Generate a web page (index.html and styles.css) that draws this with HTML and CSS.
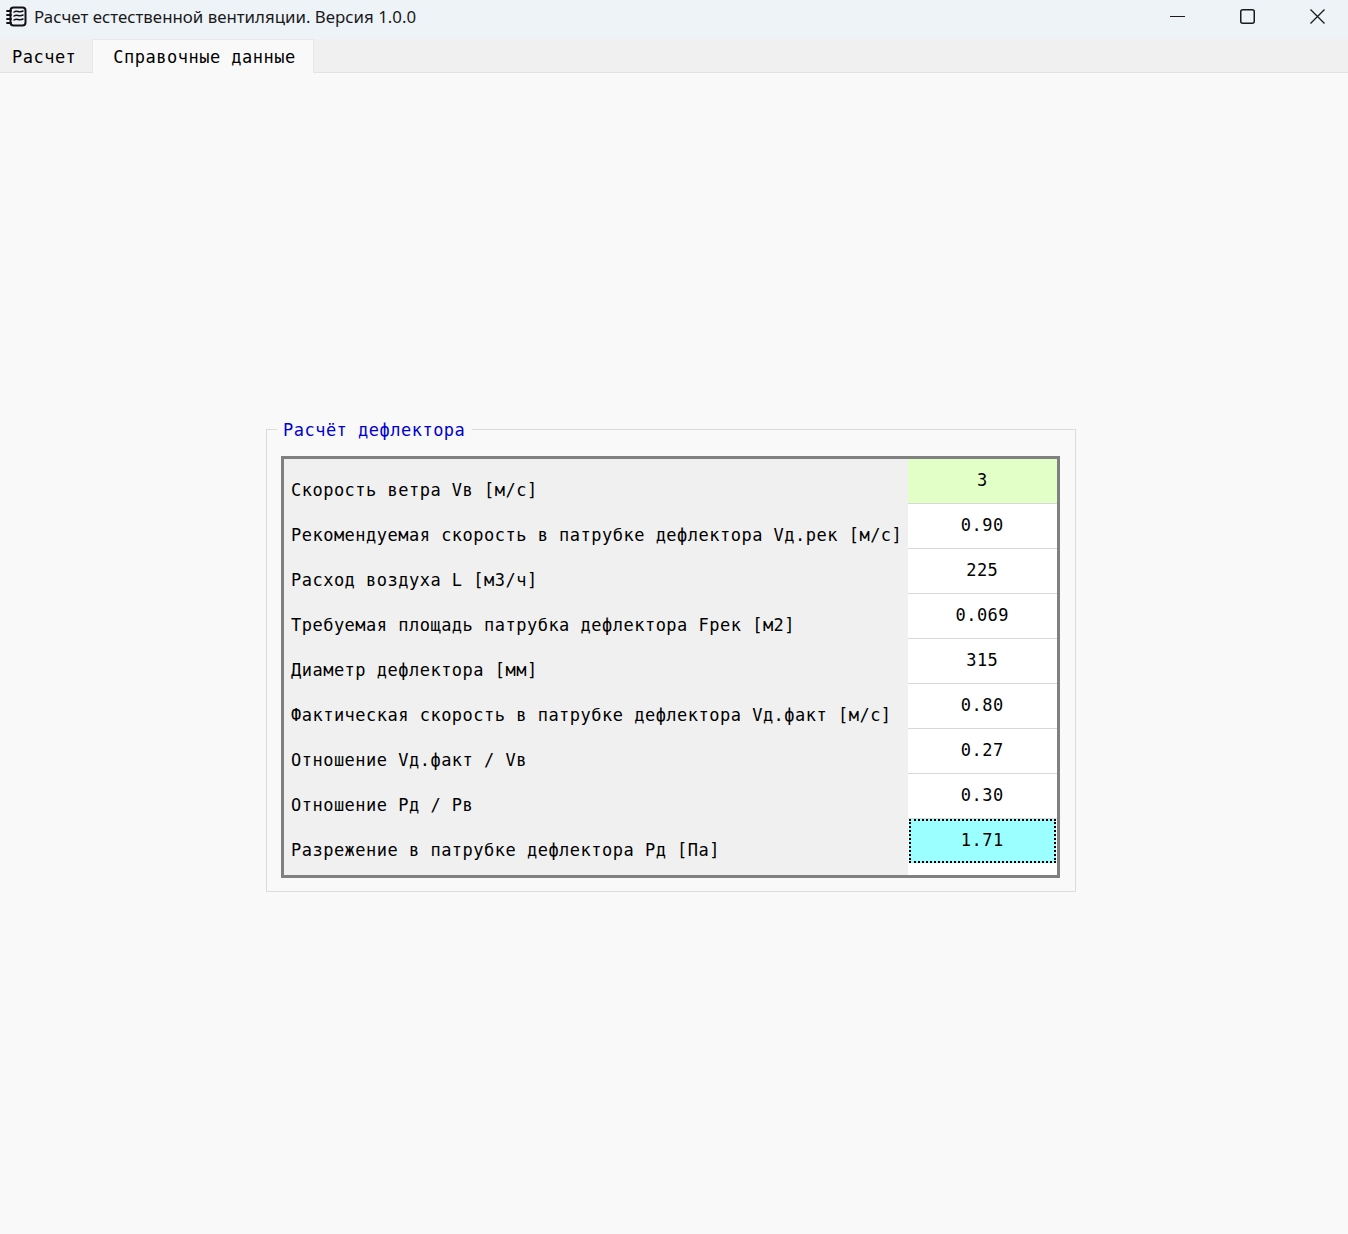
FILE: index.html
```html
<!DOCTYPE html>
<html lang="ru">
<head>
<meta charset="utf-8">
<title>Расчет естественной вентиляции</title>
<link rel="stylesheet" href="styles.css">
</head>
<body>

<div class="titlebar">
  <svg class="app-icon" width="22" height="22" viewBox="0 0 22 22" fill="none" stroke="#111" stroke-linecap="round" stroke-linejoin="round">
    <rect x="4.500" y="1.500" width="15" height="18" rx="3" stroke-width="2"/>
    <path d="M1 5h4M1 9h4M1 13h4M1 17h4" stroke-width="1.800"/>
    <path d="M8 6c3-2 5 1 9-1M8 10c3-2 5 1 9-1M8 14c3-2 5 1 9-1" stroke-width="1.500"/>
  </svg>
  <span class="title-text">Расчет естественной вентиляции. Версия 1.0.0</span>
  <div class="win-buttons">
    <svg width="15" height="15" viewBox="0 0 15 15" stroke="#1a1a1a" fill="none" stroke-width="1"><path d="M0 7.500h15"/></svg>
    <svg width="15" height="15" viewBox="0 0 15 15" stroke="#1a1a1a" fill="none" stroke-width="1.500"><rect x=".75" y=".75" width="13.500" height="13.500" rx="2"/></svg>
    <svg width="15" height="15" viewBox="0 0 15 15" stroke="#1a1a1a" fill="none" stroke-width="1.300"><path d="M.5.5l14 14M14.500.5l-14 14"/></svg>
  </div>
</div>

<div class="tabs">
  <div class="tab">Расчет</div>
  <div class="tab tab-active">Справочные данные</div>
</div>

<div class="content">
  <fieldset class="group">
    <legend>Расчёт дефлектора</legend>
    <table class="grid">
      <tr class="first"><th>Скорость ветра Vв [м/с]</th><td class="input">3</td></tr>
      <tr><th>Рекомендуемая скорость в патрубке дефлектора Vд.рек [м/с]</th><td>0.90</td></tr>
      <tr><th>Расход воздуха L [м3/ч]</th><td>225</td></tr>
      <tr><th>Требуемая площадь патрубка дефлектора Fрек [м2]</th><td>0.069</td></tr>
      <tr><th>Диаметр дефлектора [мм]</th><td>315</td></tr>
      <tr><th>Фактическая скорость в патрубке дефлектора Vд.факт [м/с]</th><td>0.80</td></tr>
      <tr><th>Отношение Vд.факт / Vв</th><td>0.27</td></tr>
      <tr><th>Отношение Рд / Рв</th><td>0.30</td></tr>
      <tr class="last"><th>Разрежение в патрубке дефлектора Рд [Па]</th><td><span class="focus">1.71</span></td></tr>
    </table>
  </fieldset>
</div>

</body>
</html>
```

FILE: styles.css
```css
html, body {
    margin: 0;
    height: 100%;
}
body {
    background: #f9f9f9;
    font-family: "DejaVu Sans Mono", "Liberation Mono", monospace;
    font-size: 17px;
    line-height: 20px;
    letter-spacing: 0.49px;
    color: #000;
}

.titlebar {
    display: flex;
    align-items: center;
    height: 39px;
    padding-left: 6px;
    background: #eef3f8;
    font-family: "Noto Sans", "Open Sans", sans-serif;
    font-size: 16.850px;
    letter-spacing: 0;
    color: #1a1a1a;
}
.app-icon {
    margin: -5px 6px 0 0;
}
.title-text {
    margin-top: -5px;
}
.win-buttons {
    display: flex;
    gap: 55px;
    margin-left: auto;
    margin-right: 23px;
    margin-top: -7px;
}

.tabs {
    display: flex;
    height: 33px;
    background: #f0f0f0;
    border-bottom: 1px solid #e2e2e2;
}
.tab {
    padding: 8px 16px 0 12px;
}
.tab-active {
    margin-bottom: -1px;
    padding: 7px 17px 0 20px;
    background: #f9f9f9;
    border: 1px solid #e8e8e8;
    border-width: 1px 1px 0 1px;
}

.content {
    padding: 345px 272px 0 266px;
}
.group {
    margin: 0;
    padding: 16px 14px 13px 14px;
    border: 1px solid #dcdcdc;
    min-width: 0;
}
.group legend {
    margin-left: -4px;
    padding: 2px 7px 0 6px;
    color: #0000d0;
}

.grid {
    width: 779px;
    border-collapse: collapse;
    border: 3px solid #808080;
    background: #fff;
}
.grid th, .grid td {
    box-sizing: border-box;
    height: 45px;
    vertical-align: top;
}
.grid th {
    padding: 21px 0 0 7px;
    text-align: left;
    font-weight: normal;
    background: #f0f0f0;
}
.grid td {
    width: 151px;
    padding: 11px 0 0;
    text-align: center;
    border-bottom: 1px solid #d8d8d8;
}
.grid td.input {
    background: #e2ffc8;
}
.grid .first th, .grid .first td {
    height: 46px;
}
.grid .last th, .grid .last td {
    height: 58px;
}
.grid .last td {
    padding: 0;
    border-bottom: 0;
}
.focus {
    display: block;
    height: 44px;
    line-height: 42px;
    margin: 0 1px;
    background: #9cffff;
    outline: 2px dotted #000;
    outline-offset: -2px;
}
```
